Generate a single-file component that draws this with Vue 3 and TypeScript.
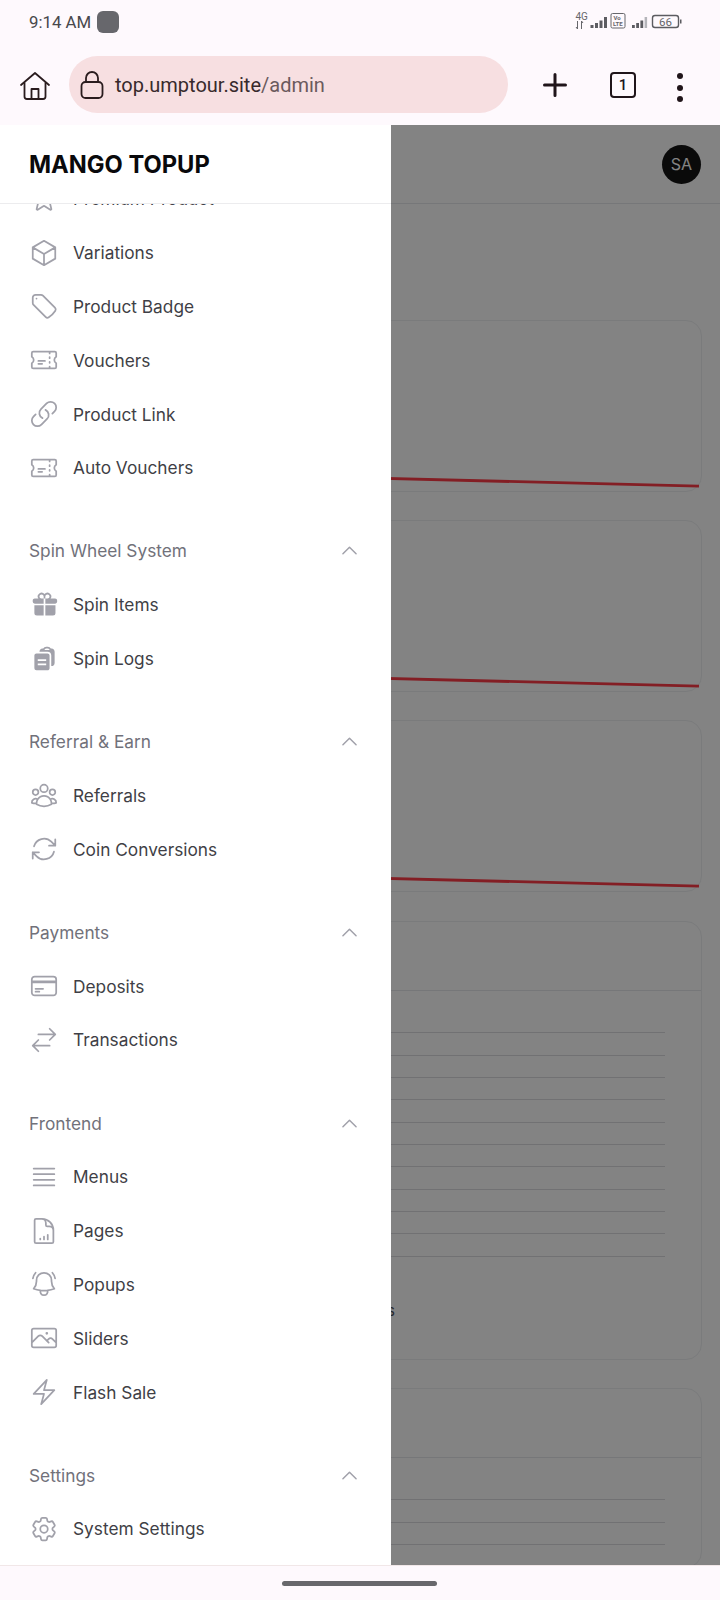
<script setup lang="ts">
type NavItem = { label: string; icon: string; solid?: boolean }
type NavGroup = { title?: string; items: NavItem[] }

const icons: Record<string, string> = {
  star: 'M11.48 3.499a.562.562 0 0 1 1.04 0l2.125 5.111a.563.563 0 0 0 .475.345l5.518.442c.499.04.701.663.321.988l-4.204 3.602a.563.563 0 0 0-.182.557l1.285 5.385a.562.562 0 0 1-.84.61l-4.725-2.885a.562.562 0 0 0-.586 0L6.982 20.54a.562.562 0 0 1-.84-.61l1.285-5.386a.562.562 0 0 0-.182-.557l-4.204-3.602a.563.563 0 0 1 .321-.988l5.518-.442a.563.563 0 0 0 .475-.345L11.48 3.5Z',
  cube: 'm21 7.5-9-5.25L3 7.5m18 0-9 5.25m9-5.25v9l-9 5.25M3 7.5l9 5.25M3 7.5v9l9 5.25m0-9v9',
  tag: 'M9.568 3H5.25A2.25 2.25 0 0 0 3 5.25v4.318c0 .597.237 1.17.659 1.591l9.581 9.581c.699.699 1.78.872 2.607.33a18.095 18.095 0 0 0 5.223-5.223c.542-.827.369-1.908-.33-2.607L11.16 3.66A2.25 2.25 0 0 0 9.568 3ZM6 6h.008v.008H6V6Z',
  ticket: 'M16.5 6v.75m0 3v.75m0 3v.75m0 3V18m-9-5.25h5.25M7.5 15h3M3.375 5.25c-.621 0-1.125.504-1.125 1.125v3.026a2.999 2.999 0 0 1 0 5.198v3.026c0 .621.504 1.125 1.125 1.125h17.25c.621 0 1.125-.504 1.125-1.125v-3.026a2.999 2.999 0 0 1 0-5.198V6.375c0-.621-.504-1.125-1.125-1.125H3.375Z',
  link: 'M13.19 8.688a4.5 4.5 0 0 1 1.242 7.244l-4.5 4.5a4.5 4.5 0 0 1-6.364-6.364l1.757-1.757m13.35-.622 1.757-1.757a4.5 4.5 0 0 0-6.364-6.364l-4.5 4.5a4.5 4.5 0 0 0 1.242 7.244',
  gift: 'M9.375 3a1.875 1.875 0 0 0 0 3.75h1.875v4.5H3.375A1.875 1.875 0 0 1 1.5 9.375v-.75c0-1.036.84-1.875 1.875-1.875h3.193A3.375 3.375 0 0 1 12 2.753a3.375 3.375 0 0 1 5.432 3.997h3.943c1.035 0 1.875.84 1.875 1.875v.75c0 1.036-.84 1.875-1.875 1.875H12.75v-4.5h1.875a1.875 1.875 0 1 0-1.875-1.875V6.75h-1.5V4.875C11.25 3.839 10.41 3 9.375 3ZM11.25 12.75H3v6.75a2.25 2.25 0 0 0 2.25 2.25h6v-9ZM12.75 12.75v9h6.75a2.25 2.25 0 0 0 2.25-2.25v-6.75h-9Z',
  logs: 'M7.502 6h7.128A3.375 3.375 0 0 1 18 9.375v9.375a3 3 0 0 0 3-3V6.108c0-1.505-1.125-2.811-2.664-2.94a48.972 48.972 0 0 0-.673-.05A3 3 0 0 0 15 1.5h-1.5a3 3 0 0 0-2.663 1.618c-.225.015-.45.032-.673.05C8.662 3.295 7.554 4.542 7.502 6ZM13.5 3A1.5 1.5 0 0 0 12 4.5h4.5A1.5 1.5 0 0 0 15 3h-1.5ZM3 9.375C3 8.339 3.84 7.5 4.875 7.5h9.75c1.036 0 1.875.84 1.875 1.875v11.25c0 1.035-.84 1.875-1.875 1.875h-9.75A1.875 1.875 0 0 1 3 20.625V9.375ZM6 12.75v1.5h7.5v-1.5H6Zm0 3.75v1.5h7.5v-1.5H6Z',
  users: 'M18 18.72a9.094 9.094 0 0 0 3.741-.479 3 3 0 0 0-4.682-2.72m.94 3.198.001.031c0 .225-.012.447-.037.666A11.944 11.944 0 0 1 12 21c-2.17 0-4.207-.576-5.963-1.584A6.062 6.062 0 0 1 6 18.719m12 0a5.971 5.971 0 0 0-.941-3.197m0 0A5.995 5.995 0 0 0 12 12.75a5.995 5.995 0 0 0-5.058 2.772m0 0a3 3 0 0 0-4.681 2.72 8.986 8.986 0 0 0 3.74.477m.94-3.197a5.971 5.971 0 0 0-.94 3.197M15 6.75a3 3 0 1 1-6 0 3 3 0 0 1 6 0Zm6 3a2.25 2.25 0 1 1-4.5 0 2.25 2.25 0 0 1 4.5 0Zm-13.5 0a2.25 2.25 0 1 1-4.5 0 2.25 2.25 0 0 1 4.5 0Z',
  refresh: 'M16.023 9.348h4.992v-.001M2.985 19.644v-4.992m0 0h4.992m-4.993 0 3.181 3.183a8.25 8.25 0 0 0 13.803-3.7M4.031 9.865a8.25 8.25 0 0 1 13.803-3.7l3.181 3.182m0-4.991v4.99',
  card: 'M2.25 8.25h19.5M2.25 9h19.5m-16.5 5.25h6m-6 2.25h3m-3.75 3h15a2.25 2.25 0 0 0 2.25-2.25V6.75A2.25 2.25 0 0 0 19.5 4.5h-15a2.25 2.25 0 0 0-2.25 2.25v10.5A2.25 2.25 0 0 0 4.5 19.5Z',
  swap: 'M7.5 21 3 16.5m0 0L7.5 12M3 16.5h13.5m0-13.5L21 7.5m0 0L16.5 12M21 7.5H7.5',
  bars: 'M3.75 5.25h16.5m-16.5 4.5h16.5m-16.5 4.5h16.5m-16.5 4.5h16.5',
  doc: 'M19.5 14.25v-2.625a3.375 3.375 0 0 0-3.375-3.375h-1.5A1.125 1.125 0 0 1 13.5 7.125v-1.5a3.375 3.375 0 0 0-3.375-3.375H8.25M9 18v.75m3-2.25v2.25m3-3.75v3.75m-4.5-16.5H5.625c-.621 0-1.125.504-1.125 1.125v17.25c0 .621.504 1.125 1.125 1.125h12.75c.621 0 1.125-.504 1.125-1.125V11.25a9 9 0 0 0-9-9Z',
  bell: 'M14.857 17.082a23.848 23.848 0 0 0 5.454-1.31A8.967 8.967 0 0 1 18 9.75V9A6 6 0 0 0 6 9v.75a8.967 8.967 0 0 1-2.312 6.022c1.733.64 3.56 1.085 5.455 1.31m5.714 0a24.255 24.255 0 0 1-5.714 0m5.714 0a3 3 0 1 1-5.714 0M3.124 7.5A8.969 8.969 0 0 1 5.292 3m13.416 0a8.969 8.969 0 0 1 2.168 4.5',
  photo: 'm2.25 15.75 5.159-5.159a2.25 2.25 0 0 1 3.182 0l5.159 5.159m-1.5-1.5 1.409-1.409a2.25 2.25 0 0 1 3.182 0l2.909 2.909m-18 3.75h16.5a1.5 1.5 0 0 0 1.5-1.5V6a1.5 1.5 0 0 0-1.5-1.5H3.75A1.5 1.5 0 0 0 2.25 6v12a1.5 1.5 0 0 0 1.5 1.5Zm10.5-11.25h.008v.008h-.008V8.25Zm.375 0a.375.375 0 1 1-.75 0 .375.375 0 0 1 .75 0Z',
  bolt: 'm3.75 13.5 10.5-11.25L12 10.5h8.25L9.75 21.75 12 13.5H3.75Z',
  cog: 'M9.594 3.94c.09-.542.56-.94 1.11-.94h2.593c.55 0 1.02.398 1.11.94l.213 1.281c.063.374.313.686.645.87.074.04.147.083.22.127.325.196.72.257 1.075.124l1.217-.456a1.125 1.125 0 0 1 1.37.49l1.296 2.247a1.125 1.125 0 0 1-.26 1.431l-1.003.827c-.293.241-.438.613-.43.992a7.723 7.723 0 0 1 0 .255c-.008.378.137.75.43.991l1.004.827c.424.35.534.955.26 1.43l-1.298 2.247a1.125 1.125 0 0 1-1.369.491l-1.217-.456c-.355-.133-.75-.072-1.076.124a6.47 6.47 0 0 1-.22.128c-.331.183-.581.495-.644.869l-.213 1.281c-.09.543-.56.94-1.11.94h-2.594c-.55 0-1.019-.398-1.11-.94l-.213-1.281c-.062-.374-.312-.686-.644-.87a6.52 6.52 0 0 1-.22-.127c-.325-.196-.72-.257-1.076-.124l-1.217.456a1.125 1.125 0 0 1-1.369-.49l-1.297-2.247a1.125 1.125 0 0 1 .26-1.431l1.004-.827c.292-.24.437-.613.43-.991a6.932 6.932 0 0 1 0-.255c.007-.38-.138-.751-.43-.992l-1.004-.827a1.125 1.125 0 0 1-.26-1.43l1.297-2.247a1.125 1.125 0 0 1 1.37-.491l1.216.456c.356.133.751.072 1.076-.124.072-.044.146-.086.22-.128.332-.183.582-.495.644-.869l.214-1.28ZM15 12a3 3 0 1 1-6 0 3 3 0 0 1 6 0Z',
}

const groups: NavGroup[] = [
  {
    items: [
      { label: 'Premium Product', icon: 'star' },
      { label: 'Variations', icon: 'cube' },
      { label: 'Product Badge', icon: 'tag' },
      { label: 'Vouchers', icon: 'ticket' },
      { label: 'Product Link', icon: 'link' },
      { label: 'Auto Vouchers', icon: 'ticket' },
    ],
  },
  {
    title: 'Spin Wheel System',
    items: [
      { label: 'Spin Items', icon: 'gift', solid: true },
      { label: 'Spin Logs', icon: 'logs', solid: true },
    ],
  },
  {
    title: 'Referral & Earn',
    items: [
      { label: 'Referrals', icon: 'users' },
      { label: 'Coin Conversions', icon: 'refresh' },
    ],
  },
  {
    title: 'Payments',
    items: [
      { label: 'Deposits', icon: 'card' },
      { label: 'Transactions', icon: 'swap' },
    ],
  },
  {
    title: 'Frontend',
    items: [
      { label: 'Menus', icon: 'bars' },
      { label: 'Pages', icon: 'doc' },
      { label: 'Popups', icon: 'bell' },
      { label: 'Sliders', icon: 'photo' },
      { label: 'Flash Sale', icon: 'bolt' },
    ],
  },
  {
    title: 'Settings',
    items: [{ label: 'System Settings', icon: 'cog' }],
  },
]

const charts = [1, 2, 3]
const tables = [
  { rows: 11, note: 'Products' },
  { rows: 4, note: '' },
]
</script>

<template>
  <div class="phone">
    <div class="status-bar">
      <div class="status-left">
        <span class="time">9:14 AM</span>
        <span class="app-dot"></span>
      </div>
      <svg class="status-icons" width="110" height="20" viewBox="0 0 110 20">
        <text x="0.5" y="8" class="tiny">4G</text>
        <path d="M2.500 9v8M1 15l1.500 2M6.500 17V9M8 11 6.500 9" fill="none" stroke="#66666b" stroke-width="1" />
        <g fill="#5c5c61">
          <rect x="15.500" y="13" width="3" height="3" />
          <rect x="20" y="11" width="3" height="5" />
          <rect x="24.500" y="8.500" width="3" height="7.500" />
          <rect x="29" y="5" width="3" height="11" />
        </g>
        <rect x="36" y="1.500" width="14" height="14.500" rx="1.500" fill="none" stroke="#66666b" />
        <text x="38.500" y="8" class="micro">Vo</text>
        <text x="38" y="14" class="micro">LTE</text>
        <g fill="#5c5c61">
          <rect x="57" y="13" width="2.800" height="3" />
          <rect x="61.200" y="11" width="2.800" height="5" />
          <rect x="65.400" y="8.500" width="2.800" height="7.500" />
        </g>
        <rect x="69.600" y="5" width="2.500" height="11" fill="#b5b5ba" />
        <rect x="77.500" y="3.500" width="26" height="12" rx="2.500" fill="none" stroke="#5c5c61" stroke-width="1.400" />
        <rect x="105" y="7.500" width="1.500" height="4" fill="#5c5c61" />
        <text x="90.500" y="14" text-anchor="middle" class="batt">66</text>
      </svg>
    </div>

    <div class="browser-bar">
      <svg class="home" width="32" height="30" viewBox="0 0 32 30" fill="none" stroke="#2a1c1e" stroke-width="1.800" stroke-linejoin="round" stroke-linecap="round">
        <path d="M2 14 16 2l14 12" />
        <path d="M5.500 12v13.500a2.500 2.500 0 0 0 2.500 2.500h16a2.500 2.500 0 0 0 2.500-2.500V12" />
        <path d="M12.500 28V18h7v10" />
      </svg>
      <div class="url-pill">
        <svg width="24" height="28" viewBox="0 0 24 28" fill="none" stroke="#2a1c1e" stroke-width="1.800">
          <rect x="1.500" y="11" width="21" height="16" rx="4" />
          <path d="M6 11V7a6 6 0 0 1 12 0v4" />
        </svg>
        <span class="url"><span class="url-host">top.umptour.site</span>/admin</span>
      </div>
      <svg class="plus" width="24" height="24" viewBox="0 0 24 24" stroke="#20151a" stroke-width="3" stroke-linecap="round">
        <path d="M12 1.500v21M1.500 12h21" />
      </svg>
      <span class="tab-count">1</span>
      <span class="kebab"><i></i><i></i><i></i></span>
    </div>

    <div class="viewport">
      <main class="page">
        <header class="page-header">
          <span class="avatar">SA</span>
        </header>
        <div class="page-body">
          <section v-for="chart in charts" :key="chart" class="card chart-card">
            <svg width="684" height="170" viewBox="0 0 684 170">
              <path d="M0 148.200 680 165.200" stroke="#ff3b46" stroke-width="2.800" fill="none" />
            </svg>
          </section>
          <section v-for="(table, i) in tables" :key="i" class="card table-card" :class="{ 'table-card--full': i === 0 }">
            <div class="table-head"></div>
            <div class="table-rows">
              <div v-for="row in table.rows" :key="row" class="table-row"></div>
            </div>
            <p v-if="table.note" class="table-note">{{ table.note }}</p>
          </section>
        </div>
      </main>

      <div class="overlay"></div>

      <aside class="drawer">
        <div class="brand">MANGO TOPUP</div>
        <nav class="nav">
          <div class="nav-scroll">
            <div v-for="(group, g) in groups" :key="g" class="nav-group">
              <div v-if="group.title" class="nav-title">
                <span>{{ group.title }}</span>
                <svg width="21" height="21" viewBox="0 0 24 24" fill="none" stroke="#a1a1aa" stroke-width="1.700" stroke-linecap="round" stroke-linejoin="round">
                  <path d="m4.500 15.750 7.500-7.500 7.500 7.500" />
                </svg>
              </div>
              <a v-for="item in group.items" :key="item.label" class="nav-item">
                <span class="nav-icon-box">
                  <svg
                    class="nav-icon"
                    :class="{ 'nav-icon--solid': item.solid }"
                    viewBox="0 0 24 24"
                    :fill="item.solid ? '#a1a1aa' : 'none'"
                    :stroke="item.solid ? 'none' : '#a1a1aa'"
                    stroke-width="1.400"
                    stroke-linecap="round"
                    stroke-linejoin="round"
                  >
                    <path :d="icons[item.icon]" fill-rule="evenodd" />
                  </svg>
                </span>
                <span>{{ item.label }}</span>
              </a>
            </div>
          </div>
        </nav>
      </aside>
    </div>

    <div class="gesture-bar"><span class="handle"></span></div>
  </div>
</template>

<style>
html,
body {
  margin: 0;
  background: #fef9fd;
}
</style>

<style scoped>
.phone {
  width: 720px;
  height: 1600px;
  display: flex;
  flex-direction: column;
  background: #fef9fd;
  font-family: Inter, "Liberation Sans", sans-serif;
  overflow: hidden;
}

.status-bar {
  height: 44px;
  display: flex;
  align-items: center;
  justify-content: space-between;
  padding: 0 38px 0 29px;
  box-sizing: border-box;
  flex: none;
}

.status-left {
  display: flex;
  align-items: center;
  gap: 6px;
}

.time {
  font-family: Roboto, sans-serif;
  font-size: 16.800px;
  color: #48484c;
}

.app-dot {
  width: 22px;
  height: 22px;
  border-radius: 6px;
  background: #67676c;
}

.status-icons {
  margin-left: auto;
  margin-right: -3px;
}

.tiny {
  font: 10px Roboto, sans-serif;
  fill: #66666b;
}

.micro {
  font: 700 6px Roboto, sans-serif;
  fill: #66666b;
}

.batt {
  font: 11.500px Roboto, sans-serif;
  fill: #66666b;
}

.browser-bar {
  height: 81px;
  flex: none;
  display: flex;
  align-items: flex-start;
  box-sizing: border-box;
  padding: 12px 0 0 19px;
}

.home {
  margin-top: 15px;
}

.url-pill {
  margin-left: 18px;
  width: 439px;
  height: 57px;
  border-radius: 29px;
  background: #f7dfe1;
  display: flex;
  align-items: center;
  gap: 11px;
  padding-left: 11px;
  box-sizing: border-box;
}

.url {
  font-family: Roboto, sans-serif;
  font-size: 20px;
  color: #6b5a5d;
}

.url-host {
  color: #382a2c;
}

.plus {
  margin: 17px 0 0 35px;
}

.tab-count {
  margin: 16px 0 0 43px;
  width: 26px;
  height: 26px;
  box-sizing: border-box;
  border: 2px solid #20151a;
  border-radius: 4px;
  font: 500 15px/22px Roboto, sans-serif;
  color: #20151a;
  text-align: center;
}

.kebab {
  margin: 17px 0 0 41px;
  display: flex;
  flex-direction: column;
  gap: 5.500px;
}

.kebab i {
  width: 6px;
  height: 6px;
  border-radius: 50%;
  background: #20151a;
}

.viewport {
  position: relative;
  flex: 1;
  overflow: hidden;
  background: #fff;
}

.page-header {
  height: 78px;
  border-bottom: 1px solid #e5e7eb;
  display: flex;
  align-items: center;
  justify-content: flex-end;
  padding-right: 19px;
}

.avatar {
  width: 39px;
  height: 39px;
  border-radius: 50%;
  background: #141414;
  color: #fff;
  font-size: 16px;
  display: flex;
  align-items: center;
  justify-content: center;
}

.page-body {
  padding: 116px 18px 0;
  display: flex;
  flex-direction: column;
  gap: 28px;
}

.card {
  border: 1px solid #eef0f2;
  border-radius: 16px;
  flex: none;
}

.chart-card {
  height: 172px;
  box-sizing: border-box;
}

.chart-card svg {
  display: block;
}

.table-head {
  height: 68px;
  border-bottom: 1px solid #e5e7eb;
}

.table-rows {
  padding: 20px 36px 0 0;
}

.table-row {
  height: 21.350px;
  border-bottom: 1px solid #dcdde0;
}

.table-note {
  margin: 44px 0 0;
  width: 376px;
  box-sizing: border-box;
  text-align: right;
  font-size: 15px;
  line-height: 20px;
  color: #52525b;
}

.table-card--full {
  margin-top: 1px;
  height: 439px;
  box-sizing: border-box;
}

.overlay {
  position: absolute;
  inset: 0;
  background: rgba(0, 0, 0, 0.486);
}

.drawer {
  position: absolute;
  left: 0;
  top: 0;
  bottom: 0;
  width: 391px;
  background: #fff;
  display: flex;
  flex-direction: column;
}

.brand {
  height: 78px;
  flex: none;
  display: flex;
  align-items: center;
  padding-left: 29px;
  font-size: 23.700px;
  font-weight: 700;
  color: #09090b;
  border-bottom: 1px solid #ececee;
}

.nav {
  flex: 1;
  overflow: hidden;
}

.nav-scroll {
  margin-top: -32px;
}

.nav-group + .nav-group {
  margin-top: 29.300px;
}

.nav-title {
  height: 53.800px;
  display: flex;
  align-items: center;
  justify-content: space-between;
  padding: 0 31px 0 29px;
  font-size: 17.300px;
  color: #71717a;
}

.nav-item {
  height: 53.800px;
  display: flex;
  align-items: center;
  gap: 14px;
  padding-left: 29px;
  font-size: 17.300px;
  color: #3f3f46;
}

.nav-icon-box {
  width: 30px;
  height: 30px;
  flex: none;
  display: flex;
  align-items: center;
  justify-content: center;
}

.nav-icon {
  width: 30px;
  height: 30px;
}

.nav-icon--solid {
  width: 27px;
  height: 27px;
}

.gesture-bar {
  height: 35px;
  flex: none;
  display: flex;
  justify-content: center;
  border-top: 1px solid #f1e7e8;
  box-sizing: border-box;
  padding-top: 15px;
}

.handle {
  width: 155px;
  height: 5px;
  border-radius: 3px;
  background: #68686c;
  margin-left: -2px;
}
</style>
